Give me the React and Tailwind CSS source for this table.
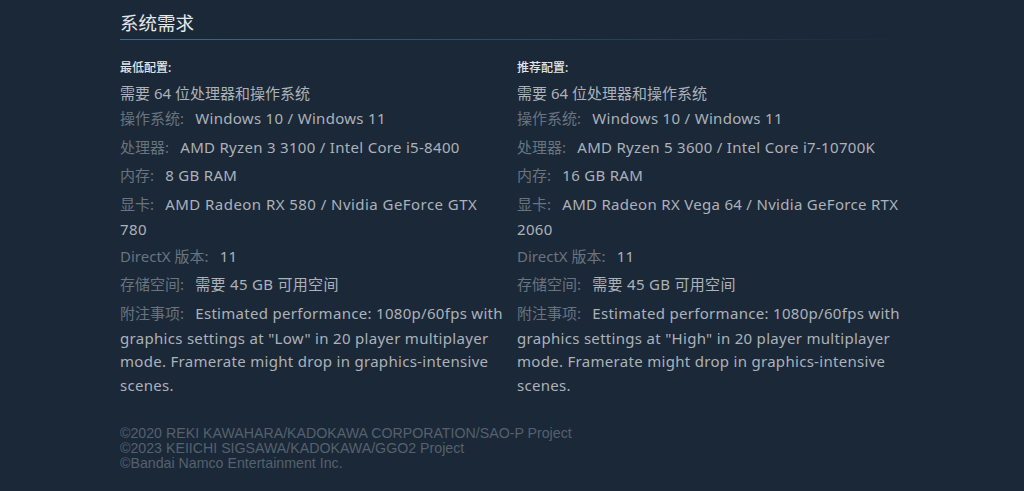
import React from "react";

const FONT = { fontFamily: '"Noto Sans", "Noto Sans CJK SC", sans-serif' };

function Item({ label, children, wide }) {
  return (
    <li className="mb-[1.5px] leading-[23.5px]">
      <span className="leading-[27px] text-[#69747f] tracking-normal">{label}:</span>{" "}
      <span className={"ml-[7px] text-[#acb2b8] " + (wide ? "tracking-[0.45px]" : "")}>{children}</span>
    </li>
  );
}

function Col({ title, cpu, ram, gpu, note, widthClass, wideGpu }) {
  return (
    <div className={widthClass + " shrink-0 text-[15px] tracking-[0.3px]"}>
      <div className="text-[12px] tracking-normal font-medium text-[#e2e5e8] leading-[18px] mb-[5px]">{title}:</div>
      <ul>
        <li className="leading-[23px] text-[#acb2b8] tracking-normal">需要 64 位处理器和操作系统</li>
        <Item label="操作系统">Windows 10 / Windows 11</Item>
        <Item label="处理器">{cpu}</Item>
        <Item label="内存">{ram}</Item>
        <Item label="显卡" wide={wideGpu}>{gpu}</Item>
        <Item label="DirectX 版本">11</Item>
        <Item label="存储空间">需要 45 GB 可用空间</Item>
        <Item label="附注事项">{note}</Item>
      </ul>
    </div>
  );
}

export default function App() {
  return (
    <div className="min-h-[491px] w-full bg-[#1b2838]" style={FONT}>
      <div className="pl-[120px] pt-[10px]">
        <div className="w-[800px]">
          <h2 className="text-[18.5px] leading-[26px] text-[#e5e8eb]">系统需求</h2>
          <div className="mt-[3px] h-px w-[784px] bg-[linear-gradient(to_right,#3b6e8c,rgba(59,110,140,0))]" />
          <div className="mt-[19px] flex gap-[13px]">
            <Col
              widthClass="w-[384px]"
              wideGpu
              title="最低配置"
              cpu="AMD Ryzen 3 3100 / Intel Core i5-8400"
              ram="8 GB RAM"
              gpu="AMD Radeon RX 580 / Nvidia GeForce GTX 780"
              note={'Estimated performance: 1080p/60fps with graphics settings at "Low" in 20 player multiplayer mode. Framerate might drop in graphics-intensive scenes.'}
            />
            <Col
              widthClass="w-[392px]"
              title="推荐配置"
              cpu="AMD Ryzen 5 3600 / Intel Core i7-10700K"
              ram="16 GB RAM"
              gpu="AMD Radeon RX Vega 64 / Nvidia GeForce RTX 2060"
              note={'Estimated performance: 1080p/60fps with graphics settings at "High" in 20 player multiplayer mode. Framerate might drop in graphics-intensive scenes.'}
            />
          </div>
          <div
            className="mt-[27px] text-[14.2px] leading-[15px] text-[#55616d]"
            style={{ fontFamily: '"Liberation Sans", Arial, sans-serif' }}
          >
            <div>©2020 REKI KAWAHARA/KADOKAWA CORPORATION/SAO-P Project</div>
            <div>©2023 KEIICHI SIGSAWA/KADOKAWA/GGO2 Project</div>
            <div>©Bandai Namco Entertainment Inc.</div>
          </div>
        </div>
      </div>
    </div>
  );
}
